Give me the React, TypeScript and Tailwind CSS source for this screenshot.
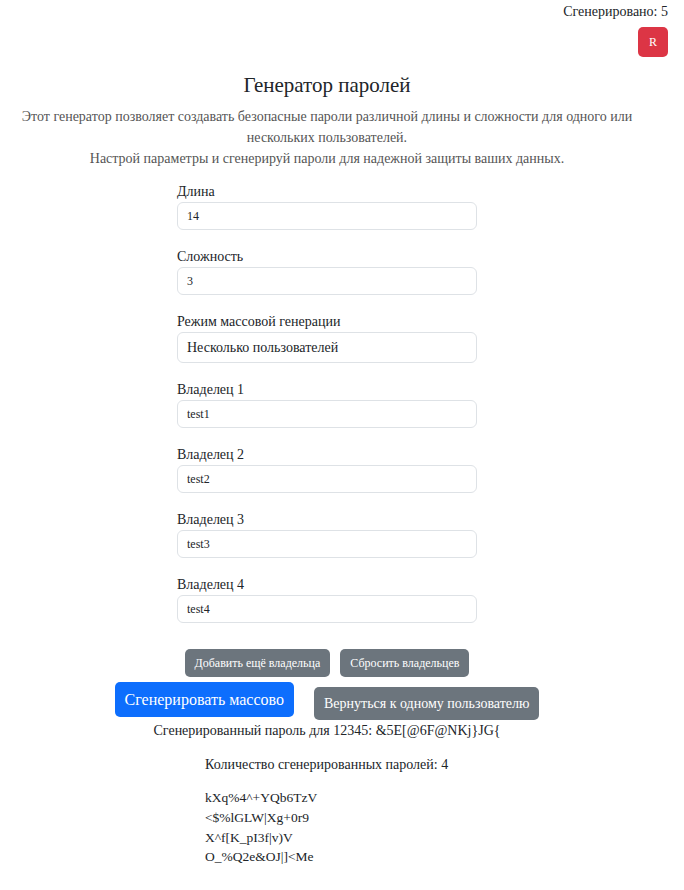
import React from "react";

const inputCls =
  "block w-[300px] h-[28px] border border-[#dee2e6] rounded-[6px] px-[9px] text-[12px] text-[#212529] bg-white outline-none font-['Liberation_Serif',serif]";

function Field({ label, value, last }: { label: string; value: string; last?: boolean }) {
  return (
    <div className={last ? "" : "mb-[16px]"}>
      <div className="text-[14px] leading-[21px]">{label}</div>
      <input className={inputCls} defaultValue={value} readOnly />
    </div>
  );
}

const pw = "Сгенерированный пароль для 12345: &5E[@6F@NKj}JG{";

export default function App() {
  return (
    <div className="font-['Liberation_Serif',serif] text-[#212529] bg-white min-h-[890px]">
      <div className="flex flex-col items-end pr-[16px] pt-[2px]">
        <div className="text-[14px] leading-[20px]">Сгенерировано: 5</div>
        <button className="mt-[5px] w-[30px] h-[30px] rounded-[5px] bg-[#dc3545] text-white text-[12px] flex items-center justify-center font-['Liberation_Serif',serif]">
          R
        </button>
      </div>

      <div className="w-[654px] flex flex-col items-center">
        <h1 className="text-[21px] leading-[26px] mt-[15px]">Генератор паролей</h1>
        <p className="mt-[8px] text-[14px] leading-[21px] text-[#555] text-center whitespace-nowrap">
          Этот генератор позволяет создавать безопасные пароли различной длины и сложности для одного или
          <br />
          нескольких пользователей.
          <br />
          Настрой параметры и сгенерируй пароли для надежной защиты ваших данных.
        </p>

        <div className="mt-[12px] w-[300px]">
          <Field label="Длина" value="14" />
          <Field label="Сложность" value="3" />
          <div className="mb-[16px]">
            <div className="text-[14px] leading-[21px]">Режим массовой генерации</div>
            <div className="w-[300px] h-[31px] border border-[#dee2e6] rounded-[6px] px-[9px] flex items-center text-[14px]">
              Несколько пользователей
            </div>
          </div>
          <Field label="Владелец 1" value="test1" />
          <Field label="Владелец 2" value="test2" />
          <Field label="Владелец 3" value="test3" />
          <Field label="Владелец 4" value="test4" last />
        </div>

        <div className="mt-[26px] flex gap-[10px]">
          <button className="h-[28px] px-[10px] rounded-[5px] bg-[#6c757d] text-white text-[12px] font-['Liberation_Serif',serif]">
            Добавить ещё владельца
          </button>
          <button className="h-[28px] px-[10px] rounded-[5px] bg-[#6c757d] text-white text-[12px] font-['Liberation_Serif',serif]">
            Сбросить владельцев
          </button>
        </div>

        <div className="mt-[5px] flex items-start gap-[20px]">
          <button className="h-[35px] px-[10px] rounded-[5px] bg-[#0d6efd] text-white text-[16px] font-['Liberation_Serif',serif]">
            Сгенерировать массово
          </button>
          <button className="mt-[5px] h-[33px] px-[10px] rounded-[5px] bg-[#6c757d] text-white text-[14px] font-['Liberation_Serif',serif]">
            Вернуться к одному пользователю
          </button>
        </div>

        <div className="text-[14px] leading-[20px] mt-[1px]">{pw}</div>
      </div>

      <div className="pl-[205px] mt-[14px] text-[14px]">
        <div className="leading-[20px]">Количество сгенерированных паролей: 4</div>
        <div className="mt-[13px] text-[13.5px] leading-[19.8px]">
          <div>{"kXq%4^+YQb6TzV"}</div>
          <div>{"<$%lGLW|Xg+0r9"}</div>
          <div>{"X^f[K_pI3f|v)V"}</div>
          <div>{"O_%Q2e&OJ|]<Me"}</div>
        </div>
      </div>
    </div>
  );
}
